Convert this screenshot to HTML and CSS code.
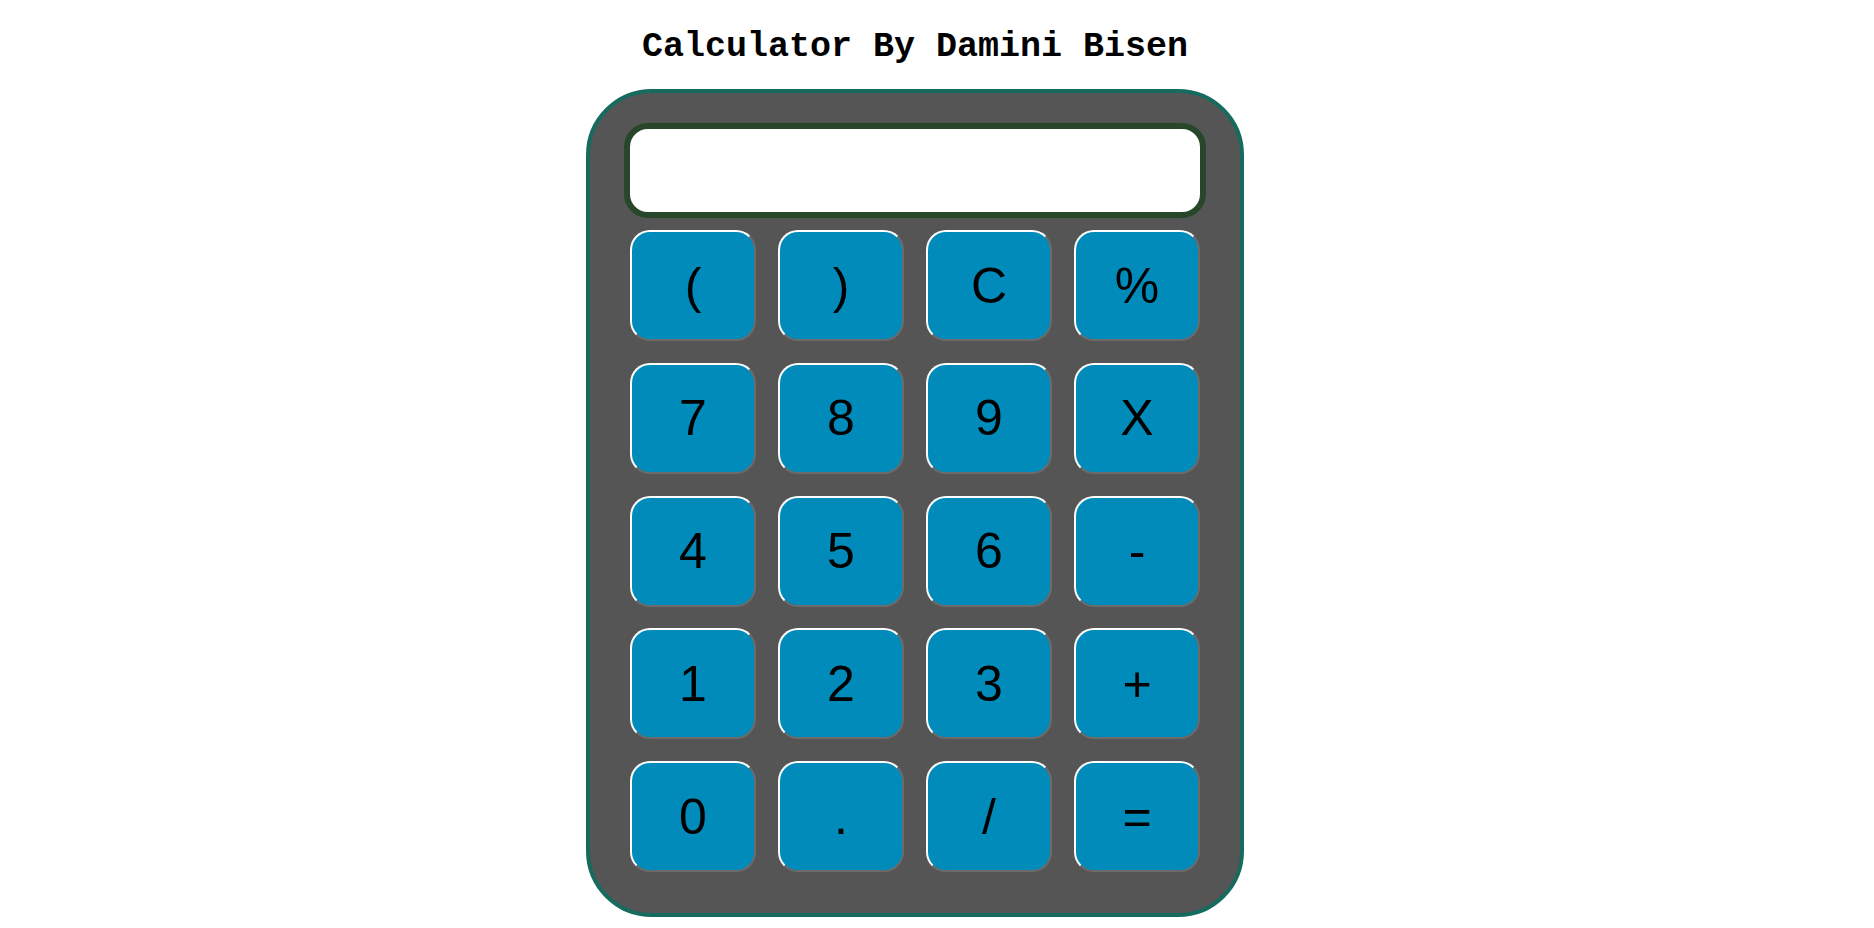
FILE: index.html
```html
<!DOCTYPE html>
<html>
<head>
<meta charset="utf-8">
<title>Calculator</title>
<link rel="stylesheet" href="styles.css">
</head>
<body>
<main class="page">
  <h1 class="title">Calculator By Damini Bisen</h1>
  <div class="calculator">
    <input class="display" type="text">
    <div class="keys">
      <button class="key">(</button>
      <button class="key">)</button>
      <button class="key">C</button>
      <button class="key">%</button>
      <button class="key">7</button>
      <button class="key">8</button>
      <button class="key">9</button>
      <button class="key">X</button>
      <button class="key">4</button>
      <button class="key">5</button>
      <button class="key">6</button>
      <button class="key">-</button>
      <button class="key">1</button>
      <button class="key">2</button>
      <button class="key">3</button>
      <button class="key">+</button>
      <button class="key">0</button>
      <button class="key">.</button>
      <button class="key">/</button>
      <button class="key">=</button>
    </div>
  </div>
</main>
</body>
</html>
```

FILE: styles.css
```css
html, body {
  margin: 0;
  padding: 0;
  background: #ffffff;
}

body {
  padding: 8px;
}

.page {
  display: flex;
  flex-direction: column;
  align-items: center;
  padding-right: 44px;
}

.title {
  margin: 19px 0 22px 0;
  font-family: "Liberation Mono", "Courier New", monospace;
  font-weight: bold;
  font-size: 35px;
  line-height: 40px;
  color: #000;
}

.calculator {
  box-sizing: border-box;
  width: 658px;
  height: 828px;
  background: #555555;
  border: 4px solid #176b5e;
  border-radius: 66px;
  padding: 30px 34px 0 34px;
  display: flex;
  flex-direction: column;
}

.display {
  box-sizing: border-box;
  width: 582px;
  height: 95px;
  border: 6px solid #28472a;
  border-radius: 24px;
  background: #ffffff;
  margin: 0;
  padding: 0 16px;
  outline: none;
}

.keys {
  margin-top: 12px;
  padding-left: 6px;
  display: grid;
  grid-template-columns: repeat(4, 126px);
  grid-auto-rows: 111px;
  column-gap: 22px;
  row-gap: 21.75px;
}

.key {
  box-sizing: border-box;
  margin: 0;
  padding: 0;
  background: #008bba;
  border-width: 2px;
  border-style: solid;
  border-top-color: #ffffff;
  border-left-color: #ffffff;
  border-right-color: #6b6b6b;
  border-bottom-color: #6b6b6b;
  border-radius: 20px;
  font-family: "Liberation Sans", Arial, sans-serif;
  font-size: 50px;
  color: #000000;
  display: flex;
  align-items: center;
  justify-content: center;
}
```
